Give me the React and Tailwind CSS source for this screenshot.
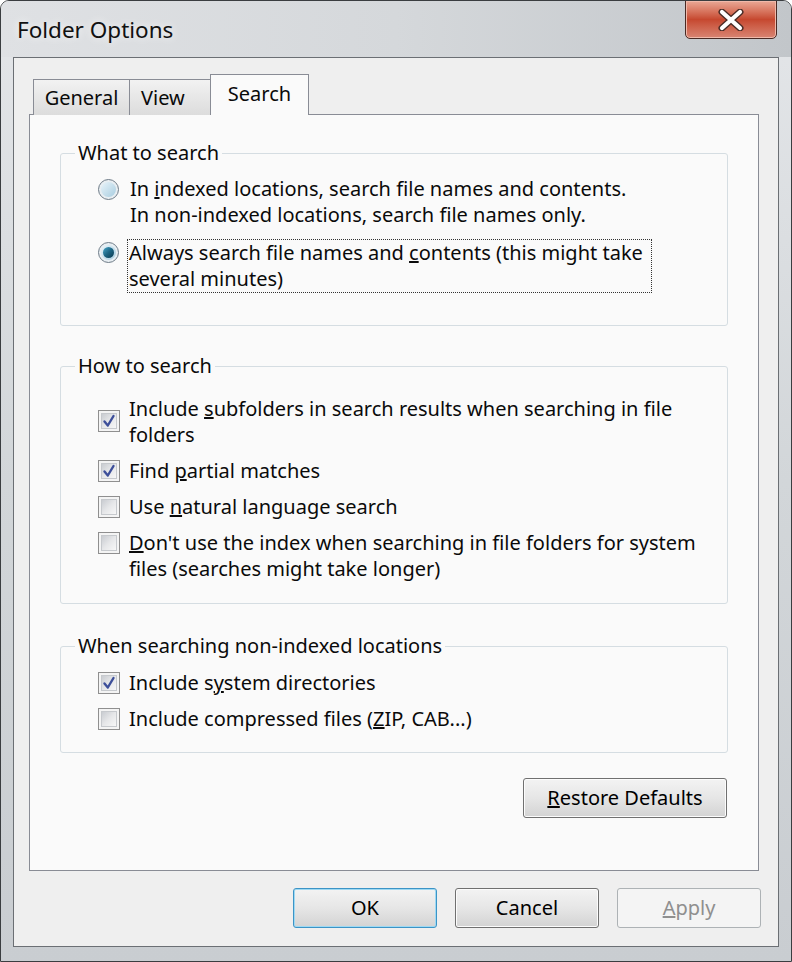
import React from "react";

function Check({ checked }) {
  return (
    <span className="w-[22px] h-[22px] shrink-0 border border-[#8f8f8f] bg-[#f4f4f4] p-[2px] flex">
      <span className="flex-1 border border-[#c6c9cd] bg-gradient-to-br from-[#c9ccd1] via-[#e6e7e9] to-[#f7f7f7] flex items-center justify-center">
        {checked && (
          <svg width="14" height="14" viewBox="0 0 14 14">
            <path d="M2.5 7.5 L5.8 11.5 L11.5 2" fill="none" stroke="#3d4f9a" strokeWidth="2.4" strokeLinejoin="round" strokeLinecap="round" />
          </svg>
        )}
      </span>
    </span>
  );
}

function Radio({ checked }) {
  return (
    <span className="w-[21px] h-[21px] shrink-0 rounded-full border border-[#6f7c88] bg-[#e8eef2] p-[2px] flex">
      <span className="flex-1 rounded-full bg-gradient-to-br from-[#e9f4fa] to-[#a8cde0] flex items-center justify-center">
        {checked && <span className="w-[11px] h-[11px] rounded-full bg-gradient-to-br from-[#49a7c9] via-[#1b6584] to-[#0c3a50]" />}
      </span>
    </span>
  );
}

function Group({ label, className, children }) {
  return (
    <div className={"relative mx-[30px] border border-[#d5dde2] rounded-[3px] " + className}>
      <span className="absolute -top-[14px] left-[14px] bg-[#fafafa] px-[3px] leading-[26px]">{label}</span>
      {children}
    </div>
  );
}

function Btn({ children, primary, disabled, className = "" }) {
  const border = primary
    ? "border-[#3c94c6] shadow-[inset_0_0_0_1px_#9ed9f3]"
    : disabled
    ? "border-[#adb2b5]"
    : "border-[#707070] shadow-[inset_0_0_0_1px_#fcfcfc]";
  const bg = disabled ? "bg-[#f4f4f4]" : "bg-gradient-to-b from-[#f3f3f3] via-[#e6e6e6] to-[#d3d3d3]";
  return (
    <div className={`w-[144px] h-[40px] rounded-[3px] border flex items-center justify-center ${border} ${bg} ${disabled ? "text-[#8f8f8f]" : "text-black"} ${className}`}>
      {children}
    </div>
  );
}

export default function App() {
  return (
    <div className="w-[792px] h-[962px] bg-white" style={{ fontFamily: '"Noto Sans", "Open Sans", sans-serif' }}>
      <div className="w-[792px] h-[962px] border border-[#3a3d40] rounded-t-[9px] bg-gradient-to-b from-[#e4e6e9] via-[#d2d6d9] to-[#c9cdd1] flex flex-col overflow-hidden">
        {/* title bar */}
        <div className="h-[56px] shrink-0 flex items-start justify-between bg-gradient-to-r from-[#dfe1e4] via-[#d5d8db] to-[#c2c6ca]">
          <div className="pl-[16px] pt-[14px] text-[22.5px] leading-[30px] text-[#111] [text-shadow:0_0_8px_#ffffff]">Folder Options</div>
          <div className="mr-[14px] -mt-px w-[92px] h-[39px] rounded-b-[5px] border border-[#4a2a24] bg-gradient-to-b from-[#e9a896] via-[#c6482f] to-[#d88472] flex items-center justify-center shadow-[inset_0_0_0_1px_#f0b9aa]">
            <svg width="32" height="22" viewBox="0 0 32 22">
              <path d="M7 3 L25 19 M25 3 L7 19" stroke="#4b2c26" strokeWidth="7" strokeLinecap="round" />
              <path d="M7 3 L25 19 M25 3 L7 19" stroke="#ffffff" strokeWidth="4.2" strokeLinecap="round" />
            </svg>
          </div>
        </div>

        {/* client */}
        <div className="mx-[12px] border border-[#6b6f74] bg-[#efefef] flex flex-col pl-[15px] pr-[19px] pt-[16px] h-[890px] text-[20px] text-[#0a0a0a]">
          {/* tabs */}
          <div className="flex items-end h-[41px] pl-[4px] relative z-10 -mb-px">
            <div className="h-[36px] w-[97px] border border-[#898c95] border-b-0 bg-gradient-to-b from-[#f2f2f2] to-[#dcdcdc] flex items-center justify-center">General</div>
            <div className="h-[36px] w-[81px] border border-[#898c95] border-l-0 border-b-0 bg-gradient-to-b from-[#f2f2f2] to-[#dcdcdc] flex items-center pl-[11px]">View</div>
            <div className="h-[41px] w-[99px] -ml-px border border-[#898c95] border-b-0 bg-[#fafafa] flex items-start justify-center pt-[4px]">Search</div>
          </div>

          {/* panel */}
          <div className="h-[757px] border border-[#898c95] bg-[#fafafa] pt-[38px] flex flex-col">
            <Group label="What to search" className="h-[173px] pt-[22px] pl-[37px]">
              <div className="flex flex-col gap-[11px] leading-[26px]">
                <div className="flex items-start gap-[10px]">
                  <div className="mt-[3px]"><Radio /></div>
                  <div className="whitespace-nowrap pl-[1px]">
                    In <u>i</u>ndexed locations, search file names and contents.<br />
                    In non-indexed locations, search file names only.
                  </div>
                </div>
                <div className="flex items-start gap-[8px]">
                  <div className="mt-[3px]"><Radio checked /></div>
                  <div className="whitespace-nowrap border border-dotted border-[#333] px-[1px] w-[525px]">
                    Always search file names and <u>c</u>ontents (this might take<br />
                    several minutes)
                  </div>
                </div>
              </div>
            </Group>

            <Group label="How to search" className="mt-[40px] h-[238px] pt-[29px] pl-[37px]">
              <div className="flex flex-col gap-[10px] leading-[26px]">
                <div className="flex items-start gap-[9px]">
                  <div className="mt-[14px]"><Check checked /></div>
                  <div className="whitespace-nowrap">
                    Include <u>s</u>ubfolders in search results when searching in file<br />folders
                  </div>
                </div>
                <div className="flex items-start gap-[9px]">
                  <div className="mt-[2px]"><Check checked /></div>
                  <div className="whitespace-nowrap">Find <u>p</u>artial matches</div>
                </div>
                <div className="flex items-start gap-[9px]">
                  <div className="mt-[2px]"><Check /></div>
                  <div className="whitespace-nowrap">Use <u>n</u>atural language search</div>
                </div>
                <div className="flex items-start gap-[9px]">
                  <div className="mt-[2px]"><Check /></div>
                  <div className="whitespace-nowrap">
                    <u>D</u>on't use the index when searching in file folders for system<br />
                    files (searches might take longer)
                  </div>
                </div>
              </div>
            </Group>

            <Group label="When searching non-indexed locations" className="mt-[42px] h-[107px] pt-[23px] pl-[37px]">
              <div className="flex flex-col gap-[10px] leading-[26px]">
                <div className="flex items-start gap-[9px]">
                  <div className="mt-[2px]"><Check checked /></div>
                  <div className="whitespace-nowrap">Include s<u>y</u>stem directories</div>
                </div>
                <div className="flex items-start gap-[9px]">
                  <div className="mt-[2px]"><Check /></div>
                  <div className="whitespace-nowrap">Include compressed files (<u>Z</u>IP, CAB...)</div>
                </div>
              </div>
            </Group>

            <div className="mt-[25px] flex justify-end pr-[31px]">
              <Btn className="w-[204px]"><span><u>R</u>estore Defaults</span></Btn>
            </div>
          </div>

          {/* bottom buttons */}
          <div className="mt-[17px] flex justify-end gap-[18px] -mr-[2px]">
            <Btn primary>OK</Btn>
            <Btn>Cancel</Btn>
            <Btn disabled><span><u>A</u>pply</span></Btn>
          </div>
        </div>
      </div>
    </div>
  );
}
